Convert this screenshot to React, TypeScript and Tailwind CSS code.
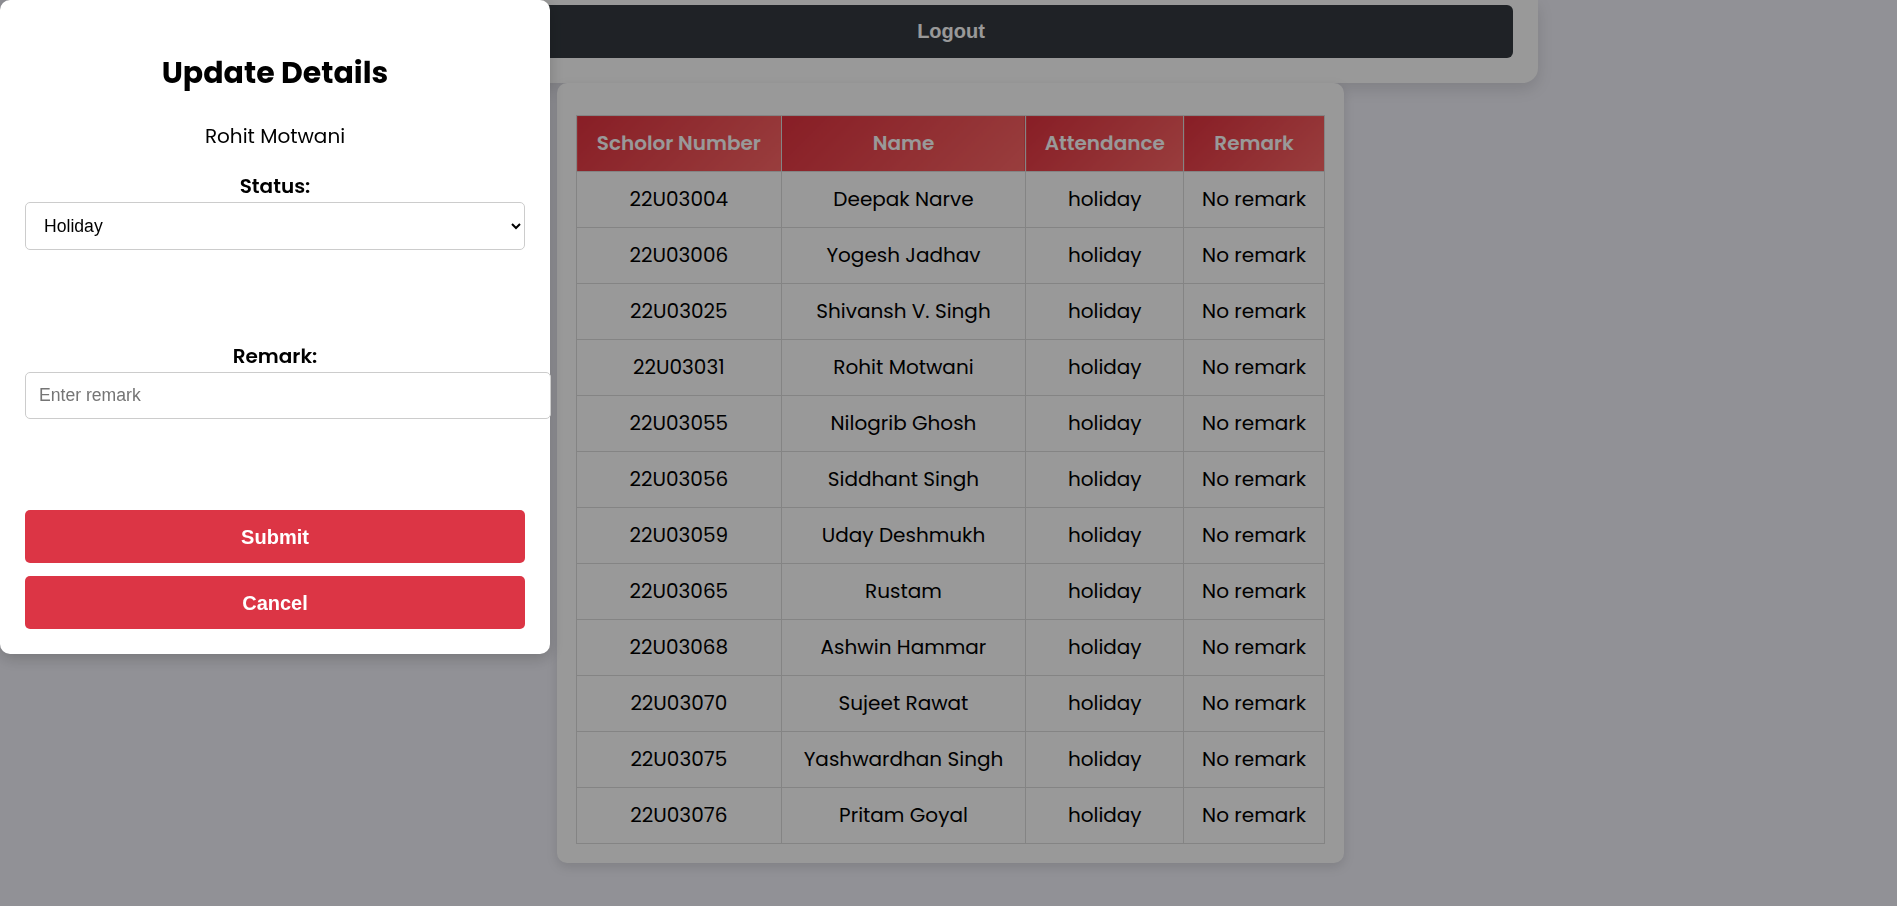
import React from "react";

const rows: [string, string][] = [
  ["22U03004", "Deepak Narve"],
  ["22U03006", "Yogesh Jadhav"],
  ["22U03025", "Shivansh V. Singh"],
  ["22U03031", "Rohit Motwani"],
  ["22U03055", "Nilogrib Ghosh"],
  ["22U03056", "Siddhant Singh"],
  ["22U03059", "Uday Deshmukh"],
  ["22U03065", "Rustam"],
  ["22U03068", "Ashwin Hammar"],
  ["22U03070", "Sujeet Rawat"],
  ["22U03075", "Yashwardhan Singh"],
  ["22U03076", "Pritam Goyal"],
];

const poppins = { fontFamily: '"Poppins", "Open Sans", sans-serif' };
const arial = { fontFamily: '"Liberation Sans", Arial, sans-serif' };

export default function App() {
  return (
    <div className="min-h-[906px] w-full bg-[#f2f2fa] overflow-hidden" style={poppins}>
      <div className="flex flex-col items-center">
        <div className="w-[1174px] ml-[5px] bg-white rounded-b-[15px] px-[25px] pt-[5px] pb-[25px] shadow-[0_6px_16px_rgba(0,0,0,0.12)]">
          <button
            className="w-full h-[53px] rounded-[6px] bg-[#343a40] text-white font-bold text-[20px] leading-[24px] pb-[2px]"
            style={arial}
          >
            Logout
          </button>
        </div>
        <div className="w-[787px] bg-white rounded-[10px] px-[19px] pt-[32px] pb-[19px] shadow-[0_4px_12px_rgba(0,0,0,0.12)] ml-[4px]">
          <table className="w-[749px] border-collapse text-center text-[20px] text-black">
            <thead>
              <tr>
                {[
                  ["Scholor Number", "w-[205px]"],
                  ["Name", "w-[245px]"],
                  ["Attendance", "w-[158px]"],
                  ["Remark", "w-[141px]"],
                ].map(([h, w]) => (
                  <th
                    key={h}
                    className={`${w} border border-[#dddddd] bg-[linear-gradient(135deg,#e3323f,#ff6767)] text-white font-semibold leading-[27px] py-[14px]`}
                  >
                    {h}
                  </th>
                ))}
              </tr>
            </thead>
            <tbody>
              {rows.map(([id, name]) => (
                <tr key={id}>
                  <td className="border border-[#dddddd] leading-[27px] py-[14px]">{id}</td>
                  <td className="border border-[#dddddd] leading-[27px] py-[14px]">{name}</td>
                  <td className="border border-[#dddddd] leading-[27px] py-[14px]">holiday</td>
                  <td className="border border-[#dddddd] leading-[27px] py-[14px]">No remark</td>
                </tr>
              ))}
            </tbody>
          </table>
        </div>
      </div>

      <div className="fixed inset-0 bg-black/40" />

      <div className="fixed top-0 left-0 w-[550px] bg-white rounded-[10px] px-[25px] pt-[25px] pb-[25px] shadow-[0_4px_16px_rgba(0,0,0,0.2)] flex flex-col text-black">
        <h2 className="mt-[31px] text-[30px] leading-[34px] font-bold text-center">Update Details</h2>
        <p className="mt-[33px] text-[20px] leading-[27px] text-center">Rohit Motwani</p>
        <label className="mt-[23px] text-[20px] leading-[27px] font-semibold text-center">Status:</label>
        <select
          className="mt-[2px] w-full h-[48px] border border-[#cccccc] rounded-[5px] bg-white pl-[14px] pr-[8px] text-[17.6px] text-black"
          style={arial}
          defaultValue="holiday"
        >
          <option value="present">Present</option>
          <option value="absent">Absent</option>
          <option value="holiday">Holiday</option>
        </select>
        <label className="mt-[93px] text-[20px] leading-[27px] font-semibold text-center">Remark:</label>
        <input
          className="mt-[2px] w-[526px] h-[47px] border border-[#cccccc] rounded-[5px] bg-white px-[13px] text-[17.6px] text-black placeholder:text-[#757575] outline-none"
          style={arial}
          placeholder="Enter remark"
        />
        <button
          className="mt-[91px] w-full h-[53px] rounded-[5px] bg-[#dc3545] text-white font-bold text-[20px]"
          style={arial}
        >
          Submit
        </button>
        <button
          className="mt-[13px] w-full h-[53px] rounded-[5px] bg-[#dc3545] text-white font-bold text-[20px]"
          style={arial}
        >
          Cancel
        </button>
      </div>
    </div>
  );
}
